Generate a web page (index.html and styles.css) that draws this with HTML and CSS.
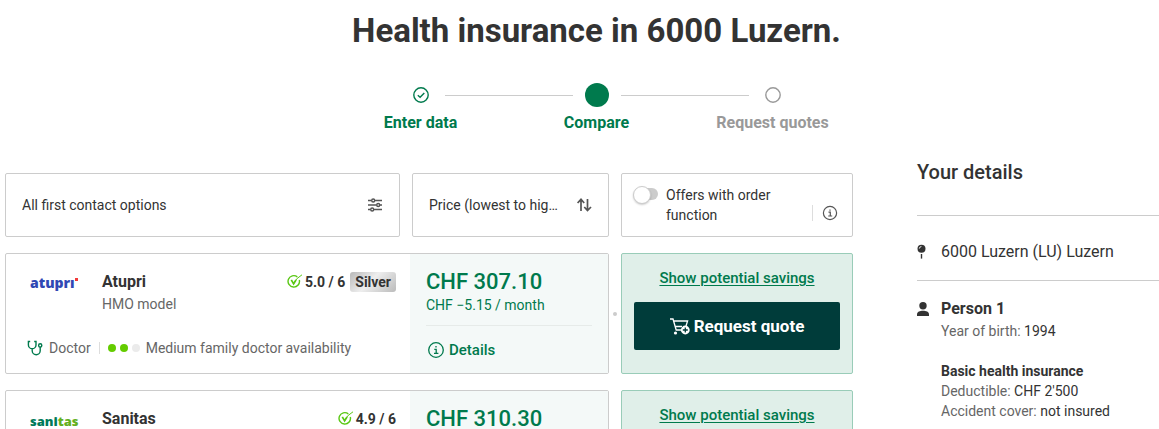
FILE: index.html
```html
<!DOCTYPE html>
<html lang="en">
<head>
  <meta charset="UTF-8">
  <meta name="viewport" content="width=device-width, initial-scale=1">
  <title>Health insurance in 6000 Luzern.</title>
  <link rel="stylesheet" href="styles.css">
</head>
<body>

  <header class="page-header">
    <h1>Health insurance in 6000 Luzern.</h1>
    <ol class="steps">
      <li class="step done">
        <span class="step-icon">
          <svg width="16" height="16" viewBox="0 0 16 16" fill="none" stroke="currentColor" stroke-width="1.4"><circle cx="8" cy="8" r="7.2"/><path d="M4.8 8.2l2.3 2.1 4.2-4.4"/></svg>
        </span>
        <span>Enter data</span>
      </li>
      <li class="step current">
        <span class="step-icon">
          <svg width="24" height="24" viewBox="0 0 24 24"><circle cx="12" cy="12" r="12" fill="currentColor"/></svg>
        </span>
        <span>Compare</span>
      </li>
      <li class="step">
        <span class="step-icon">
          <svg width="16" height="16" viewBox="0 0 16 16" fill="none" stroke="currentColor" stroke-width="1.4"><circle cx="8" cy="8" r="7.2"/></svg>
        </span>
        <span>Request quotes</span>
      </li>
    </ol>
  </header>

  <div class="layout">
    <main class="results">

      <!-- filters -->
      <div class="row filters">
        <button type="button" class="filter">
          <span class="filter-text">All first contact options</span>
          <svg width="16" height="16" viewBox="0 0 16 16" fill="none" stroke="currentColor" stroke-width="1.4"><path d="M1 3.5h3.5M8 3.5h7M1 8h8.5M13 8h2M1 12.5h2.5M7 12.5h8"/><circle cx="6.2" cy="3.5" r="1.5"/><circle cx="11.2" cy="8" r="1.5"/><circle cx="5.2" cy="12.5" r="1.5"/></svg>
        </button>
        <button type="button" class="filter">
          <span class="filter-text">Price (lowest to highest)</span>
          <svg width="16" height="16" viewBox="0 0 16 16" fill="none" stroke="currentColor" stroke-width="1.7"><path d="M5 14V3M1.6 6L5 2.3 8.2 6M11.5 2v11M8.3 10l3.2 3.6L15 10"/></svg>
        </button>
        <div class="filter toggle-filter">
          <input type="checkbox" id="order" class="switch">
          <label for="order">Offers with order function</label>
          <button type="button" class="info-btn" aria-label="Info">
            <svg width="16" height="16" viewBox="0 0 16 16" fill="none" stroke="currentColor" stroke-width="1.2"><circle cx="8" cy="8" r="6.6"/><path d="M6.5 7.2h1.8v3.6M6.2 11h4M8 4.4v1.4"/></svg>
          </button>
        </div>
      </div>

      <!-- offers -->
      <div class="row offer">
        <article class="card">
          <div class="card-main">
            <div class="card-head">
              <span class="logo atupri">atuprı<svg width="3" height="3" viewBox="0 0 3 3"><rect width="3" height="3" fill="#f23a3a"/></svg></span>
              <h2>Atupri</h2>
              <span class="rating">
                <svg width="16" height="16" viewBox="0 0 16 16" fill="none" stroke="#5ac814"><path d="M10.3 2.9A5.7 5.7 0 1 0 12.3 6" stroke-width="1.4"/><path d="M4.3 5.8L6.6 9.8 9 6" stroke-width="1.7"/><path d="M6.6 9.8Q9 4 15 .8" stroke-width="1"/></svg>
                5.0 / 6
                <span class="badge">Silver</span>
              </span>
            </div>
            <p class="model">HMO model</p>
            <p class="access">
              <svg width="16" height="16" viewBox="0 0 16 16" fill="none" stroke="#007a4d" stroke-width="1.4"><path d="M3.2 1.5H1.4v3.4a3.8 3.8 0 0 0 7.6 0V1.5H7.2M5.2 8.8v2a4 4 0 0 0 8 0V7"/><circle cx="13.2" cy="5.4" r="1.6"/></svg>
              <span class="doctor">Doctor</span>
              <span class="dots"><i class="on"></i><i class="on"></i><i></i></span>
              <span>Medium family doctor availability</span>
            </p>
          </div>
          <div class="card-price">
            <p class="price">CHF 307.10</p>
            <p class="saving">CHF −5.15 / month</p>
            <button type="button" class="details">
              <svg width="16" height="16" viewBox="0 0 16 16" fill="none" stroke="currentColor" stroke-width="1.3"><circle cx="8" cy="8" r="7.3"/><path d="M6.3 7.3h1.9v3.9M6 11.3h4.4M8 4v1.6"/></svg>
              Details
            </button>
          </div>
        </article>
        <span class="link-dot"></span>
        <div class="action">
          <a href="#">Show potential savings</a>
          <button type="button" class="quote">
            <svg width="20" height="17" viewBox="0 0 20 17" fill="none" stroke="currentColor" stroke-width="1.3"><path d="M0 1h3l3.2 11h5M3.6 3h14l-1.6 5M5 8.5h7"/><circle cx="5.5" cy="15" r="1.6" fill="currentColor" stroke="none"/><circle cx="15.3" cy="12" r="4.4" fill="currentColor" stroke="none"/><path d="M15.3 9.5v5M12.8 12h5" stroke="#003c3a"/></svg>
            Request quote
          </button>
        </div>
      </div>

      <div class="row offer">
        <article class="card">
          <div class="card-main">
            <div class="card-head">
              <span class="logo sanitas">sani<b>tas</b></span>
              <h2>Sanitas</h2>
              <span class="rating">
                <svg width="16" height="16" viewBox="0 0 16 16" fill="none" stroke="#5ac814"><path d="M10.3 2.9A5.7 5.7 0 1 0 12.3 6" stroke-width="1.4"/><path d="M4.3 5.8L6.6 9.8 9 6" stroke-width="1.7"/><path d="M6.6 9.8Q9 4 15 .8" stroke-width="1"/></svg>
                4.9 / 6
              </span>
            </div>
          </div>
          <div class="card-price">
            <p class="price">CHF 310.30</p>
          </div>
        </article>
        <div class="action">
          <a href="#">Show potential savings</a>
        </div>
      </div>

    </main>

    <aside class="sidebar">
      <h2>Your details</h2>
      <div class="place">
        <svg width="12" height="16" viewBox="0 0 12 16" fill="#333"><circle cx="4.5" cy="4.8" r="4"/><path d="M3.8 10h1.4v4.6H3.8z"/><path d="M2.3 4.6A2.3 2.3 0 0 1 4.4 2.5" fill="none" stroke="#fff" stroke-width=".9"/></svg>
        <span>6000 Luzern (LU) Luzern</span>
      </div>
      <div class="person">
        <svg width="12" height="16" viewBox="0 0 12 16" fill="#333"><circle cx="6" cy="4.8" r="3.7"/><path d="M0 15v-1.6C0 10.6 3 9.7 6 9.7s6 .9 6 3.7V15z"/></svg>
        <div>
          <h3>Person 1</h3>
          <p>Year of birth: <b>1994</b></p>
          <h4>Basic health insurance</h4>
          <p>Deductible: <b>CHF 2'500</b></p>
          <p>Accident cover: <b>not insured</b></p>
        </div>
      </div>
    </aside>
  </div>

</body>
</html>
```

FILE: styles.css
```css
* {
  box-sizing: border-box;
}

body {
  margin: 0;
  height: 100vh;
  overflow: hidden;
  font-family: Roboto, "Liberation Sans", sans-serif;
  font-size: 14px;
  line-height: 20px;
  color: #333;
  background-color: #fff;
}

h1, h2, h3, h4, p {
  margin: 0;
}

svg {
  flex: none;
}

button {
  font: inherit;
  color: inherit;
  cursor: pointer;
}

/* header */
.page-header {
  padding: 11px 0 0 34px;
  text-align: center;
}

h1 {
  font-size: 33px;
  line-height: 40px;
  font-weight: 700;
}

.steps {
  display: flex;
  justify-content: center;
  margin: 32px 0 0;
  padding: 0;
  list-style: none;
}

.step {
  display: flex;
  flex-direction: column;
  align-items: center;
  width: 176px;
  gap: 6px;
  font-size: 16px;
  font-weight: 700;
  color: #999;
}

.step.done,
.step.current {
  color: #007a4d;
}

.step-icon {
  display: flex;
  align-items: center;
  justify-content: center;
  gap: 16px;
  width: 100%;
  height: 24px;
}

.step-icon::before,
.step-icon::after {
  content: "";
  flex: 1;
  height: 1px;
  background-color: #ccc;
}

.step.current .step-icon {
  gap: 12px;
}

.step.done .step-icon::before,
.step:last-child .step-icon::after {
  background-color: transparent;
}

/* results */
.layout {
  display: grid;
  grid-template-columns: 1fr 242px;
  gap: 64px;
  padding-left: 5px;
}

.results {
  display: flex;
  flex-direction: column;
  gap: 16px;
  padding-top: 40px;
}

.row {
  display: grid;
  grid-template-columns: minmax(0, 1fr) 232px;
  gap: 12px;
  position: relative;
}

.row.filters {
  grid-template-columns: minmax(0, 1fr) 197px 232px;
}

.filter {
  display: flex;
  align-items: center;
  justify-content: space-between;
  gap: 16px;
  height: 64px;
  padding: 0 16px;
  text-align: left;
  background-color: #fff;
  border: 1px solid #ccc;
  border-radius: 2px;
}

.filter svg {
  color: #555;
}

.filter-text {
  overflow: hidden;
  text-overflow: ellipsis;
  white-space: nowrap;
}

.toggle-filter {
  align-items: flex-start;
  gap: 8px;
  padding: 11px 14px 11px 12px;
}

.toggle-filter label {
  flex: 1;
}

.switch {
  appearance: none;
  position: relative;
  width: 24px;
  height: 12px;
  margin: 3px 0 0;
  border-radius: 6px;
  background-color: #ccc;
}

.switch::before {
  content: "";
  position: absolute;
  top: -2px;
  left: -1px;
  width: 16px;
  height: 16px;
  border: 1px solid #ccc;
  border-radius: 50%;
  background-color: #fff;
  box-shadow: 0 1px 2px rgba(0, 0, 0, 0.2);
}

.info-btn {
  display: flex;
  align-self: flex-end;
  padding: 0 0 0 9px;
  margin-bottom: 4px;
  border: 0;
  border-left: 1px solid #ddd;
  background: none;
}

.card {
  display: flex;
  min-height: 121px;
  border: 1px solid #ccc;
  border-radius: 2px;
}

.card-main {
  flex: 1;
  padding: 18px 14px 0 24px;
}

.card-head {
  display: flex;
  align-items: center;
}

.card-head h2 {
  flex: 1;
  font-size: 16px;
  line-height: 20px;
}

.logo {
  display: flex;
  align-items: center;
  width: 72px;
  padding-top: 2px;
  font-family: "Open Sans", sans-serif;
  font-size: 14px;
  line-height: 18px;
  font-weight: 800;
}

.atupri {
  color: #3048b4;
}

.atupri svg {
  margin-bottom: 8px;
}

.sanitas {
  padding-top: 4px;
  font-size: 13px;
  line-height: 16px;
  color: #007a5a;
}

.sanitas b {
  font-weight: 800;
  color: #64b01e;
}

.rating {
  display: flex;
  align-items: center;
  gap: 2px;
  font-size: 14px;
  font-weight: 700;
}

.badge {
  margin-left: 3px;
  padding: 0 5px;
  border-radius: 3px;
  background: linear-gradient(135deg, #b8b8b8, #eee 45%, #bbb);
}

.model {
  padding: 2px 0 0 72px;
  color: #666;
}

.access {
  display: flex;
  align-items: center;
  gap: 6px;
  margin: 24px 0 0 -3px;
  color: #666;
}

.doctor {
  margin-right: 2px;
}

.dots {
  display: flex;
  gap: 4px;
  padding: 2px 0 2px 8px;
  border-left: 1px solid #ddd;
}

.dots i {
  width: 8px;
  height: 8px;
  border-radius: 50%;
  background-color: #ebebeb;
}

.dots .on {
  background-color: #64cc00;
}

.card-price {
  width: 198px;
  padding: 16px 16px 0;
  color: #007a4d;
  background-color: #f4f9f8;
}

.price {
  font-size: 22px;
  line-height: 24px;
  font-weight: 500;
}

.saving {
  padding: 1px 0 10px;
  border-bottom: 1px solid #e6ebe9;
}

.details {
  display: flex;
  align-items: center;
  gap: 5px;
  margin-top: 14px;
  padding: 0 2px;
  border: 0;
  background: none;
  font-size: 15px;
  font-weight: 500;
}

/* connects the card with its action box */
.link-dot {
  position: absolute;
  top: 59px;
  right: 236px;
  width: 4px;
  height: 4px;
  border-radius: 50%;
  background-color: #ccc;
}

.action {
  display: flex;
  flex-direction: column;
  align-items: center;
  gap: 14px;
  padding: 14px 12px 0;
  border: 1px solid #99ccb8;
  border-radius: 2px;
  background-color: #e0efe9;
}

.action a {
  font-size: 15px;
  font-weight: 500;
  color: #007a4d;
  text-underline-offset: 2px;
}

.quote {
  display: flex;
  align-items: center;
  justify-content: center;
  gap: 4px;
  width: 100%;
  height: 48px;
  border: 0;
  border-radius: 2px;
  font-size: 17px;
  font-weight: 700;
  color: #fff;
  background-color: #003c3a;
}

/* sidebar */
.sidebar {
  padding-top: 27px;
}

.sidebar h2 {
  padding-bottom: 31px;
  font-size: 20px;
  line-height: 24px;
  font-weight: 500;
}

.place,
.person {
  display: flex;
  gap: 12px;
  border-top: 1px solid #ccc;
}

.place {
  align-items: center;
  height: 65px;
  padding-top: 8px;
  font-size: 16px;
}

.person {
  padding-top: 18px;
}

.person > svg {
  margin-top: 2px;
}

.person h3 {
  padding-bottom: 2px;
  font-size: 16px;
  line-height: 20px;
}

.person h4 {
  padding-top: 20px;
  font-size: 14px;
  line-height: 20px;
}

.person p {
  color: #666;
}

.person p b {
  font-weight: 400;
  color: #333;
}
```
